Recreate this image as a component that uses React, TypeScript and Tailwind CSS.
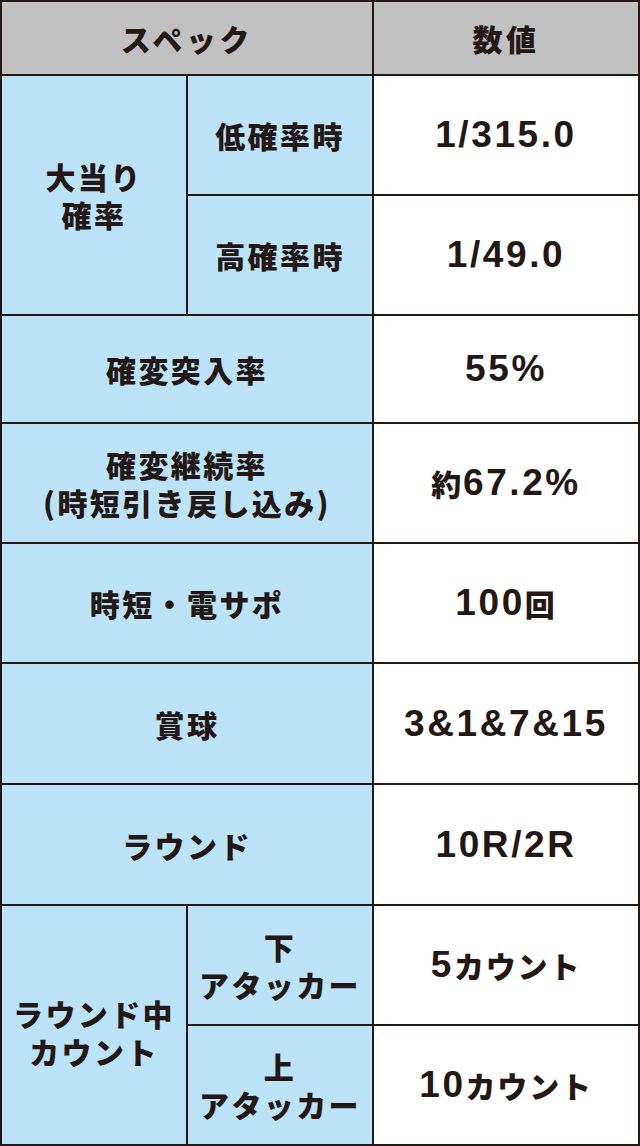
const label =
  "flex items-center justify-center text-center bg-[#bce3f8] text-[30px] leading-[38px] font-black tracking-[0.08em] font-['Noto_Sans_CJK_JP',sans-serif]";
const value =
  "flex items-center justify-center text-center bg-white text-[37px] font-bold tracking-[0.07em] font-['Liberation_Sans','Noto_Sans_CJK_JP',sans-serif]";
const head =
  "flex items-center justify-center bg-[#c1c1c1] text-[30px] font-black tracking-[0.12em] font-['Noto_Sans_CJK_JP',sans-serif]";
const kana = "text-[30px] font-black tracking-[0.06em] font-['Noto_Sans_CJK_JP',sans-serif]";

export default function App() {
  return (
    <div className="w-[640px] h-[1146px] bg-white">
      <div className="grid grid-cols-[184px_184px_264px] grid-rows-[72px_118px_118px_106px_118px_118px_119px_119px_118px_118px] gap-[2px] p-[2px] bg-[#231815] text-[#231815]">
        {/* header */}
        <div className={`${head} col-span-2`}>スペック</div>
        <div className={head}>数値</div>

        {/* 大当り確率 */}
        <div className={`${label} row-span-2`}>
          大当り
          <br />
          確率
        </div>
        <div className={label}>低確率時</div>
        <div className={value}>1/315.0</div>
        <div className={label}>高確率時</div>
        <div className={value}>1/49.0</div>

        <div className={`${label} col-span-2`}>確変突入率</div>
        <div className={value}>55%</div>

        <div className={`${label} col-span-2`}>
          確変継続率
          <br />
          (時短引き戻し込み)
        </div>
        <div className={value}>
          <span className={kana}>約</span>67.2%
        </div>

        <div className={`${label} col-span-2`}>時短・電サポ</div>
        <div className={value}>
          100<span className={kana}>回</span>
        </div>

        <div className={`${label} col-span-2`}>賞球</div>
        <div className={value}>3&amp;1&amp;7&amp;15</div>

        <div className={`${label} col-span-2`}>ラウンド</div>
        <div className={value}>10R/2R</div>

        {/* ラウンド中カウント */}
        <div className={`${label} row-span-2 pt-[14px]`}>
          ラウンド中
          <br />
          カウント
        </div>
        <div className={label}>
          下
          <br />
          アタッカー
        </div>
        <div className={value}>
          5<span className={kana}>カウント</span>
        </div>
        <div className={label}>
          上
          <br />
          アタッカー
        </div>
        <div className={value}>
          10<span className={kana}>カウント</span>
        </div>
      </div>
    </div>
  );
}
